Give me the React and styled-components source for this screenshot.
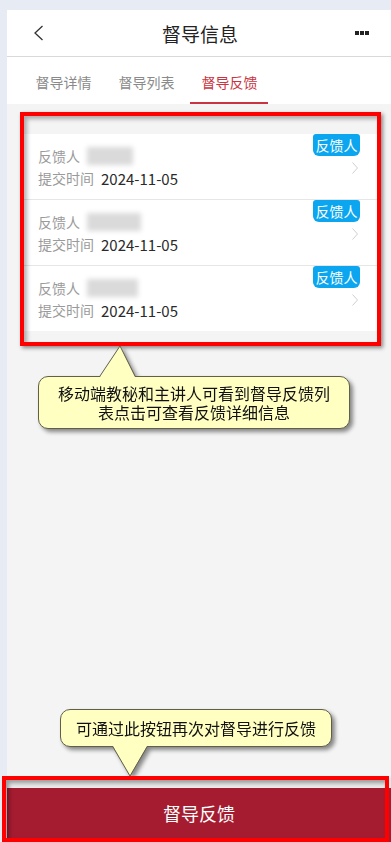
import React from "react";
import styled, { createGlobalStyle } from "styled-components";

const GlobalStyle = createGlobalStyle`
  * { box-sizing: border-box; }
  body {
    margin: 0;
    background: #e7ecf4;
    font-family: "Noto Sans CJK SC", "Noto Sans", sans-serif;
  }
`;

const Page = styled.div`
  height: 842px;
  padding: 10px 0 0 7px;
  overflow: hidden;
`;

const Phone = styled.div`
  position: relative;
  height: 832px;
  display: flex;
  flex-direction: column;
  background: #f4f4f4;
`;

const Header = styled.div`
  height: 47px;
  display: flex;
  align-items: center;
  justify-content: space-between;
  padding: 0 22px 0 24px;
  background: #fff;
  border-bottom: 1px solid #d9d9d9;
`;

const Title = styled.h1`
  margin: 0;
  font-size: 19px;
  font-weight: 400;
  color: #222;
`;

const IconSlot = styled.div`
  width: 14px;
  display: flex;
  align-items: center;
  justify-content: center;
`;

const Dots = styled.div`
  display: flex;
  gap: 1px;
  span {
    width: 4px;
    height: 4px;
    background: #222;
  }
`;

const Tabs = styled.div`
  height: 47px;
  display: flex;
  padding-left: 15px;
  background: #fff;
`;

const Tab = styled.div`
  position: relative;
  width: 83px;
  display: flex;
  align-items: center;
  justify-content: center;
  padding-top: 3px;
  font-size: 14px;
  color: ${(p) => (p.active ? "#c8343f" : "#8a8a8a")};
  &::after {
    content: "";
    display: ${(p) => (p.active ? "block" : "none")};
    position: absolute;
    left: 2px;
    right: 3px;
    bottom: 0;
    height: 2px;
    background: #c8343f;
  }
`;

const Body = styled.div`
  position: relative;
  flex: 1;
  padding: 8px 10px 0 13px;
`;

const Highlight = styled.div`
  position: relative;
  border: 4px solid #ff0000;
  padding: 18px 0 11px;
  box-shadow: 2px 2px 4px rgba(0, 0, 0, 0.45);
  &::after {
    content: "";
    position: absolute;
    inset: 0;
    box-shadow: inset 3px 3px 4px rgba(0, 0, 0, 0.3);
    pointer-events: none;
  }
`;

const List = styled.div`
  background: #fff;
`;

const Item = styled.div`
  position: relative;
  padding: 11px 14px 10px;
  border-bottom: ${(p) => (p.last ? "none" : "1px solid #e6e6e6")};
`;

const Line = styled.div`
  display: flex;
  align-items: center;
  height: 22px;
  gap: 7px;
`;

const Label = styled.span`
  font-size: 14px;
  color: #9a9a9a;
`;

const Value = styled.span`
  font-size: 15px;
  color: #2a2a2a;
  font-family: "Noto Sans CJK SC", Roboto, sans-serif;
`;

const Blur = styled.div`
  width: ${(p) => p.w}px;
  height: 18px;
  background: #dadada;
  filter: blur(2.5px);
`;

const Badge = styled.div`
  position: absolute;
  top: 0;
  right: 17px;
  width: 47px;
  height: 22px;
  display: flex;
  align-items: center;
  justify-content: center;
  background: #0ba6ef;
  color: #fff;
  font-size: 14px;
  border-radius: 3px 3px 6px 6px;
`;

const Chevron = styled.svg`
  position: absolute;
  right: 19px;
  top: 28px;
`;

const Bubble = styled.div`
  position: absolute;
  left: ${(p) => p.x}px;
  top: ${(p) => p.y}px;
  width: ${(p) => p.w}px;
  height: ${(p) => p.h}px;
  filter: drop-shadow(3px 3px 2px rgba(0, 0, 0, 0.45));
`;

const BubbleBox = styled.div`
  height: 100%;
  display: flex;
  align-items: center;
  justify-content: center;
  text-align: center;
  padding: 0 14px;
  background: #ffffc2;
  border: 1px solid #5f5f4a;
  border-radius: 10px;
  font-size: 16px;
  line-height: 19px;
  color: #111;
`;

const Pointer = styled.svg`
  position: absolute;
  left: 0;
  overflow: visible;
`;

const Footer = styled.div`
  position: relative;
  padding-top: 10px;
  background: linear-gradient(#e9e9e9, #f7f7f7);
`;

const SubmitButton = styled.div`
  height: 54px;
  display: flex;
  align-items: center;
  justify-content: center;
  padding-bottom: 4px;
  background: #a51c30;
  color: #fff;
  font-size: 18px;
`;

const FooterMark = styled.div`
  position: absolute;
  left: -5px;
  right: 2px;
  top: -2px;
  bottom: 0;
  border: 4px solid #ff0000;
  box-shadow: inset 3px 3px 4px rgba(0, 0, 0, 0.35);
  pointer-events: none;
`;

const records = [{ w: 46 }, { w: 54 }, { w: 51 }];

const Callout = ({ x, y, w, h, tip, children }) => {
  const up = tip.y < 0;
  const baseY = up ? 1 : h - 1;
  return (
    <Bubble x={x} y={y} w={w} h={h}>
      <BubbleBox>{children}</BubbleBox>
      <Pointer width={w} height={h} style={{ top: 0 }}>
        <polygon
          points={`${tip.a},${baseY} ${tip.x},${tip.y} ${tip.b},${baseY}`}
          fill="#ffffc2"
        />
        <polyline
          points={`${tip.a},${up ? 0 : h} ${tip.x},${tip.y} ${tip.b},${up ? 0 : h}`}
          fill="none"
          stroke="#5f5f4a"
          strokeWidth="1"
        />
      </Pointer>
    </Bubble>
  );
};

export default function App() {
  return (
    <Page>
      <GlobalStyle />
      <Phone>
        <Header>
          <IconSlot>
            <svg width="11" height="16" viewBox="0 0 11 16">
              <polyline points="9.5,1 2,8 9.5,15" fill="none" stroke="#333" strokeWidth="1.3" />
            </svg>
          </IconSlot>
          <Title>督导信息</Title>
          <Dots>
            <span />
            <span />
            <span />
          </Dots>
        </Header>
        <Tabs>
          <Tab>督导详情</Tab>
          <Tab>督导列表</Tab>
          <Tab active>督导反馈</Tab>
        </Tabs>
        <Body>
          <Highlight>
            <List>
              {records.map((r, i) => (
                <Item key={i} last={i === records.length - 1}>
                  <Line>
                    <Label>反馈人</Label>
                    <Blur w={r.w} />
                  </Line>
                  <Line>
                    <Label>提交时间</Label>
                    <Value>2024-11-05</Value>
                  </Line>
                  <Badge>反馈人</Badge>
                  <Chevron width="6" height="12" viewBox="0 0 6 12">
                    <polyline points="0.5,0.5 5.5,6 0.5,11.5" fill="none" stroke="#cfcfcf" strokeWidth="1" />
                  </Chevron>
                </Item>
              ))}
            </List>
          </Highlight>
          <Callout x={31} y={272} w={312} h={53} tip={{ x: 82, y: -30, a: 62, b: 97 }}>
            移动端教秘和主讲人可看到督导反馈列表点击可查看反馈详细信息
          </Callout>
          <Callout x={53} y={605} w={272} h={38} tip={{ x: 70, y: 67, a: 53, b: 87 }}>
            可通过此按钮再次对督导进行反馈
          </Callout>
        </Body>
        <Footer>
          <SubmitButton>督导反馈</SubmitButton>
          <FooterMark />
        </Footer>
      </Phone>
    </Page>
  );
}
